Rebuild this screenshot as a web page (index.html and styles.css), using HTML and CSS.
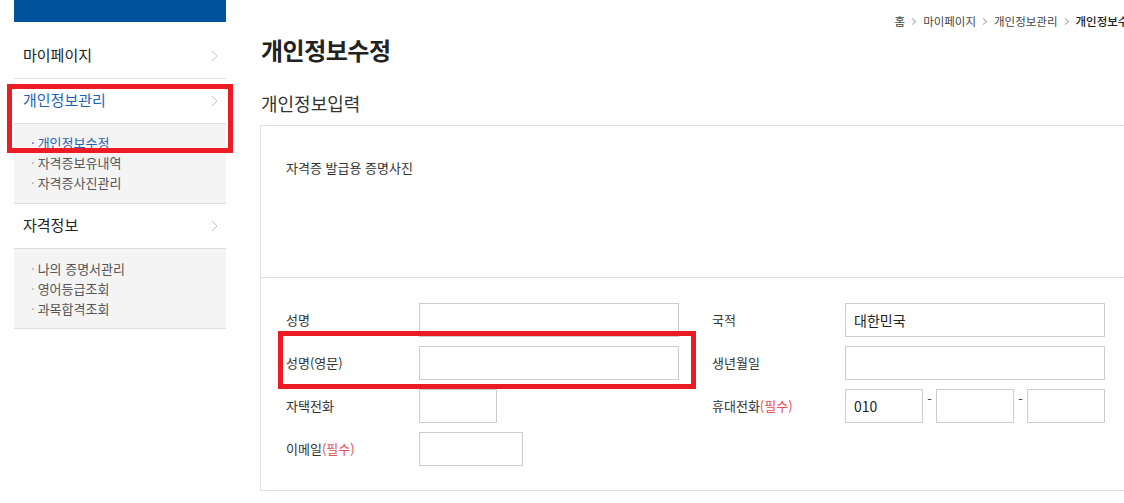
FILE: index.html
```html
<!DOCTYPE html>
<html lang="ko">
<head>
<meta charset="utf-8">
<title>개인정보수정</title>
<link rel="stylesheet" href="styles.css">
</head>
<body>
<div class="page">
  <aside class="lnb">
    <div class="lnb-top"></div>
    <ul class="lnb-menu">
      <li class="lnb-item"><a class="lnb-link" href="#">마이페이지<svg class="chev" width="7" height="12" viewBox="0 0 7 12"><polyline points="1,1 6,6 1,11" fill="none" stroke="#c4c4c4" stroke-width="1"/></svg></a></li>
      <li class="lnb-item"><a class="lnb-link is-active" href="#">개인정보관리<svg class="chev" width="7" height="12" viewBox="0 0 7 12"><polyline points="1,1 6,6 1,11" fill="none" stroke="#c4c4c4" stroke-width="1"/></svg></a></li>
      <li class="lnb-sub">
        <a class="sub-link is-active" href="#">개인정보수정</a>
        <a class="sub-link" href="#">자격증보유내역</a>
        <a class="sub-link" href="#">자격증사진관리</a>
      </li>
      <li class="lnb-item"><a class="lnb-link" href="#">자격정보<svg class="chev" width="7" height="12" viewBox="0 0 7 12"><polyline points="1,1 6,6 1,11" fill="none" stroke="#c4c4c4" stroke-width="1"/></svg></a></li>
      <li class="lnb-sub">
        <a class="sub-link" href="#">나의 증명서관리</a>
        <a class="sub-link" href="#">영어등급조회</a>
        <a class="sub-link" href="#">과목합격조회</a>
      </li>
    </ul>
  </aside>

  <main class="content">
    <nav class="breadcrumb">
      <span>홈</span><i class="bc-sep"></i>
      <span>마이페이지</span><i class="bc-sep"></i>
      <span>개인정보관리</span><i class="bc-sep"></i>
      <span class="bc-current">개인정보수정</span>
    </nav>
    <h2 class="page-title">개인정보수정</h2>
    <h3 class="sec-title">개인정보입력</h3>
    <div class="form-box">
      <div class="photo-sec">자격증 발급용 증명사진</div>
      <div class="form-grid">
        <label class="lbl">성명</label>
        <input class="inp inp-full" type="text">
        <label class="lbl">국적</label>
        <input class="inp inp-full" type="text" value="대한민국">

        <label class="lbl">성명(영문)</label>
        <input class="inp inp-full" type="text">
        <label class="lbl">생년월일</label>
        <input class="inp inp-full" type="text">

        <label class="lbl">자택전화</label>
        <input class="inp inp-sm" type="text">
        <label class="lbl">휴대전화<em class="req">(필수)</em></label>
        <div class="phone">
          <input class="inp inp-sm" type="text" value="010">
          <span class="dash">-</span>
          <input class="inp inp-sm" type="text">
          <span class="dash">-</span>
          <input class="inp inp-sm" type="text">
        </div>

        <label class="lbl">이메일<em class="req">(필수)</em></label>
        <input class="inp inp-md" type="text">
        <span></span>
        <span></span>
      </div>
    </div>
  </main>
</div>

<div class="mark mark-1"></div>
<div class="mark mark-2"></div>
</body>
</html>
```

FILE: styles.css
```css
html {
  overflow: hidden;
}

body {
  margin: 0;
  background: #fff;
  font-family: "Noto Sans CJK KR", "Noto Sans", sans-serif;
  color: #333;
  position: relative;
}

a {
  text-decoration: none;
  color: inherit;
}

ul {
  list-style: none;
  margin: 0;
  padding: 0;
}

.page {
  display: flex;
  align-items: flex-start;
  gap: 34px;
  padding-left: 14px;
  width: 1200px;
}

/* ---------- sidebar ---------- */
.lnb {
  width: 212px;
  flex: none;
}

.lnb-top {
  height: 22px;
  background: #00529b;
}

.lnb-menu {
  margin-top: 12px;
}

.lnb-item {
  border-bottom: 1px solid #dedede;
}

.lnb-link {
  display: flex;
  align-items: center;
  justify-content: space-between;
  box-sizing: border-box;
  height: 44px;
  padding: 0 8px 3px 9px;
  font-size: 15px;
  color: #222;
}

.lnb-link.is-active {
  color: #1c64b4;
}

.chev {
  display: block;
  margin-top: 3px;
}

.lnb-sub {
  background: #f4f4f4;
  border-bottom: 1px solid #dedede;
  padding: 9px 0 10px 17px;
  display: flex;
  flex-direction: column;
}

.lnb-item + .lnb-sub + .lnb-item + .lnb-sub {
  padding-top: 10px;
  padding-bottom: 9px;
}

.sub-link {
  font-size: 13px;
  line-height: 20px;
  color: #555;
}

.sub-link::before {
  content: "·";
  color: #aaa;
  margin-right: 3px;
}

.sub-link.is-active {
  color: #1c64b4;
}

.sub-link.is-active::before {
  color: #1c64b4;
}

/* ---------- content ---------- */
.content {
  width: 879px;
  flex: none;
}

.breadcrumb {
  display: flex;
  justify-content: flex-end;
  align-items: center;
  padding-top: 14px;
  height: 14px;
  font-size: 11.5px;
  line-height: 14px;
  color: #444;
}

.bc-sep {
  display: inline-block;
  width: 4px;
  height: 4px;
  border-top: 1px solid #aaa;
  border-right: 1px solid #aaa;
  transform: rotate(45deg);
  margin: 0 8px 0 5px;
}

.bc-current {
  color: #222;
  font-weight: 500;
}

.page-title {
  margin: 7px 0 0 1px;
  font-size: 24px;
  line-height: 30px;
  font-weight: 700;
  color: #222;
  letter-spacing: -0.5px;
}

.sec-title {
  margin: 26px 0 10px 1px;
  font-size: 18px;
  line-height: 24px;
  font-weight: 400;
  color: #333;
}

.form-box {
  border-top: 1px solid #dce0e6;
  border-left: 1px solid #dce0e6;
}

.photo-sec {
  height: 152px;
  box-sizing: border-box;
  padding: 32px 0 0 25px;
  font-size: 13px;
  line-height: 20px;
  color: #333;
  border-bottom: 1px solid #dce0e6;
}

.form-grid {
  display: grid;
  grid-template-columns: 133px 293px 133px 260px;
  row-gap: 9px;
  align-items: center;
  padding: 25px 0 24px 25px;
  border-bottom: 1px solid #dce0e6;
}

.lbl {
  font-size: 13px;
  line-height: 20px;
  color: #333;
}

.req {
  font-style: normal;
  color: #e8505b;
}

.inp {
  box-sizing: border-box;
  height: 34px;
  border: 1px solid #cccccc;
  padding: 0 8px;
  font-family: "Noto Sans CJK KR", "Noto Sans", sans-serif;
  font-size: 14px;
  color: #222;
  background: #fff;
  margin: 0;
  outline: none;
}

.inp-full {
  width: 260px;
}

.inp-sm {
  width: 78px;
}

.inp-md {
  width: 104px;
}

.phone {
  display: flex;
  align-items: flex-start;
}

.dash {
  width: 13px;
  text-align: center;
  font-size: 13px;
  line-height: 20px;
  color: #444;
}

/* ---------- annotation marks ---------- */
.mark {
  position: absolute;
  border: 5px solid #ed1c24;
  box-sizing: border-box;
  pointer-events: none;
}

.mark-1 {
  left: 7px;
  top: 84px;
  width: 226px;
  height: 69px;
}

.mark-2 {
  left: 278px;
  top: 331px;
  width: 418px;
  height: 58px;
}
```
